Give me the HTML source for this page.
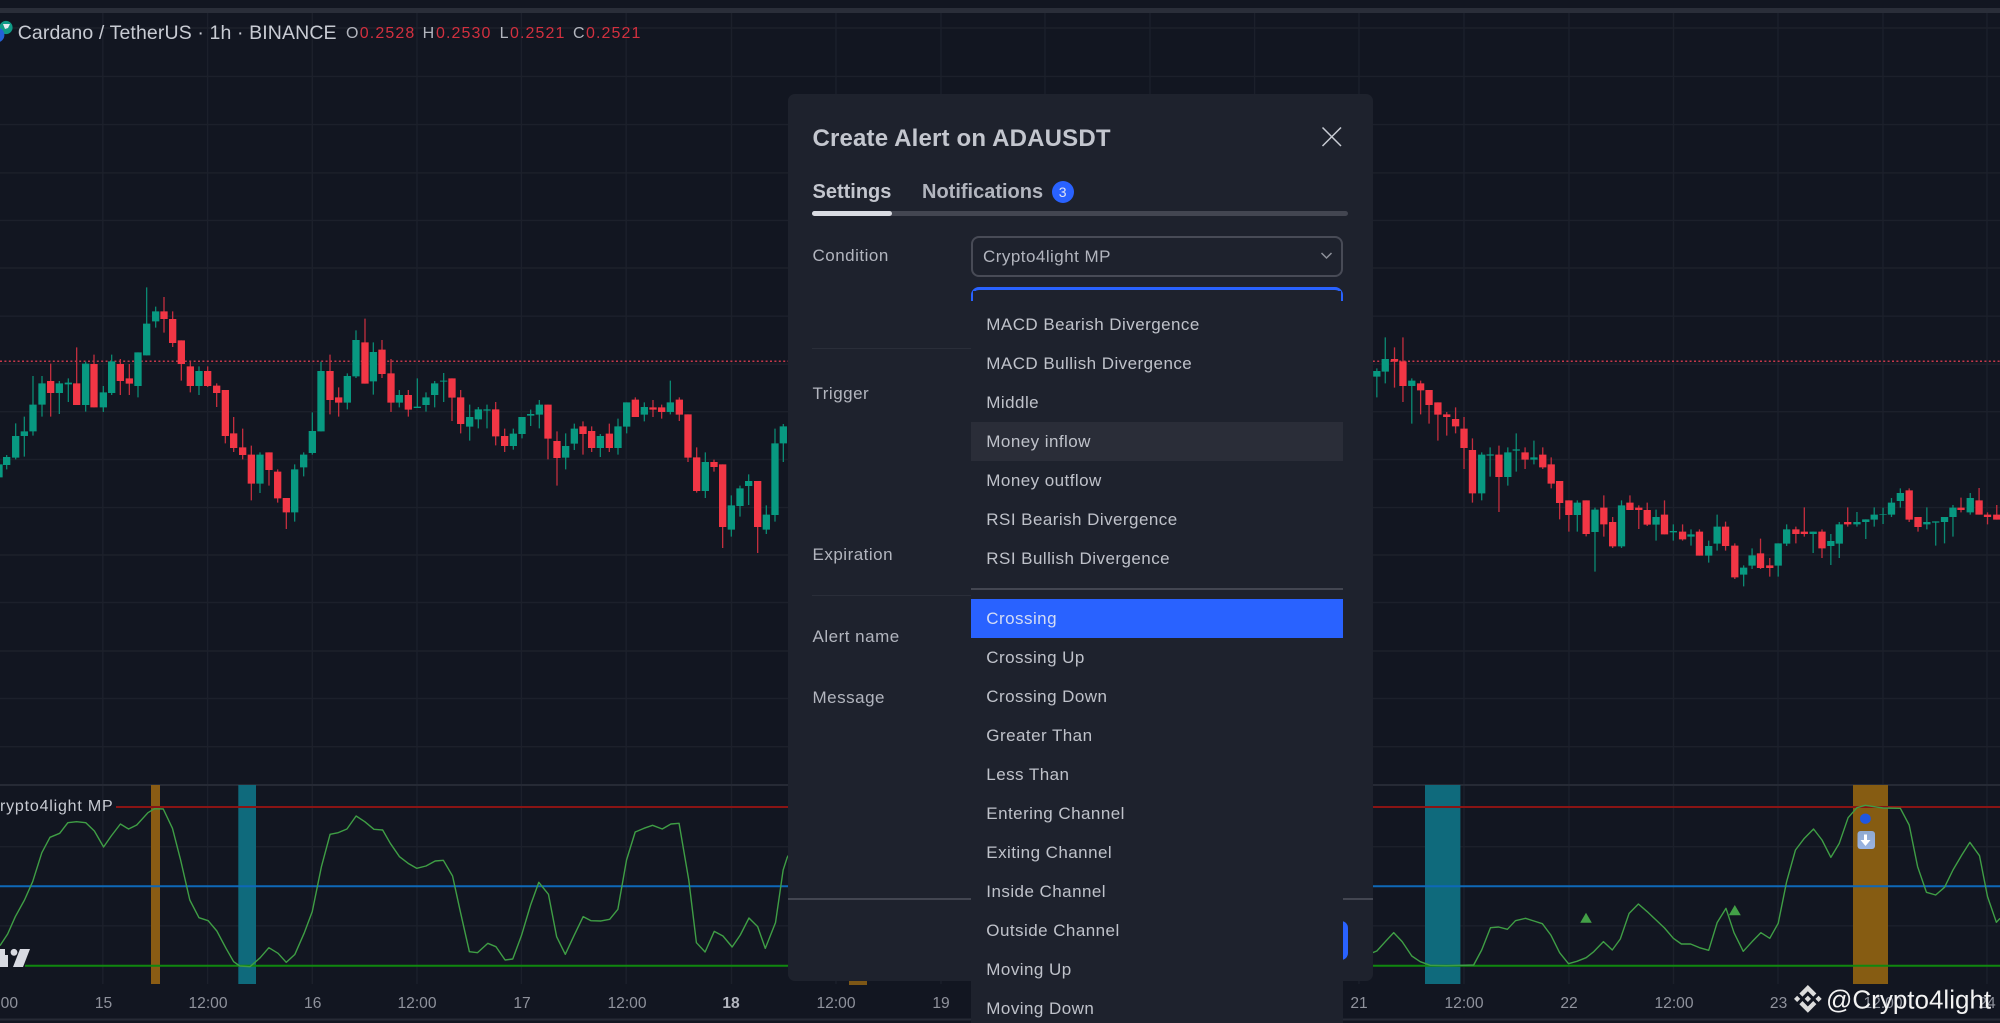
<!DOCTYPE html>
<html lang="en"><head><meta charset="utf-8"><title>Create Alert on ADAUSDT</title>
<style>
html,body{margin:0;padding:0;width:2000px;height:1023px;overflow:hidden;background:#121621;font-family:"Liberation Sans",sans-serif}
#s{position:absolute;left:0;top:0}
.a{position:absolute;white-space:nowrap}
.l{position:absolute;left:812.5px;color:#b2b5be;font-size:17px;letter-spacing:.5px;line-height:20px;white-space:nowrap}
.i{position:absolute;left:986.3px;color:#bfc2ca;font-size:17px;letter-spacing:.45px;line-height:20px;white-space:nowrap}
</style></head><body>
<svg id="s" width="2000" height="1023" viewBox="0 0 2000 1023" xmlns="http://www.w3.org/2000/svg">
<rect width="2000" height="1023" fill="#121621"/>
<rect y="8" width="2000" height="5" fill="#2a2e39"/>
<path stroke="#1c202b" stroke-width="1.4" fill="none" d="M0 28H2000M0 76.4H2000M0 124.6H2000M0 172.9H2000M0 220.4H2000M0 268H2000M0 316.2H2000M0 364.2H2000M0 411.7H2000M0 459.5H2000M0 507.6H2000M0 555H2000M0 602.5H2000M0 651H2000M0 698.5H2000M0 746.7H2000M0 846.7H2000M0 925.8H2000M102.8 13V984M207.6 13V984M312.3 13V984M417 13V984M521.4 13V984M626.2 13V984M731.5 13V984M836 13V984M941 13V984M1045 13V984M1150 13V984M1254.6 13V984M1359 13V984M1464 13V984M1569 13V984M1673.5 13V984M1778 13V984M1883 13V984M1987 13V984"/>
<path stroke="#262a35" stroke-width="2" fill="none" d="M0 785H2000M0 1019.5H2000"/>
<path stroke="#c4384a" stroke-width="1.5" stroke-dasharray="2 2.4" fill="none" d="M0 361.2H2000"/>

<!-- candles A -->
<g transform="translate(0 270) scale(.33333)" fill="none">
<path vector-effect="non-scaling-stroke" stroke="#0b8a73" stroke-width="1.3" d="M-3 575V630M20 555V598M47 460V568M73 440V560M99 318V497M126 318V440M178 333V432M205 325V396M257 275V425M310 348V426M335 254V375M414 247V382M440 52V256M467 110V173M597 289V375M780 547V669M884 583V755M911 547V619M937 427V554M963 275V484M1042 310V418M1068 181V324M1120 217V374M1198 360V412"/>
<path vector-effect="non-scaling-stroke" stroke="#c42e3e" stroke-width="1.3" d="M152 281V440M230 232V405M282 254V412M361 267V375M388 282V375M492 81V188M518 124V231M544 211V332M571 275V367M623 289V351M650 340V411M676 360V520M701 441V546M728 476V568M754 527V691M807 547V647M833 598V698M859 684V777M990 254V433M1016 352V440M1095 146V341M1146 210V324M1173 267V426"/>
<path vector-effect="non-scaling-stroke" stroke="#089981" stroke-width="7.3" d="M-3 583V622M20 561V585M47 498V563M73 484V498M99 404V484M126 340V404M178 340V369M205 338V343M257 281V405M310 367V412M335 274V369M414 247V348M440 161V256M467 124V154M597 303V348M780 554V641M884 598V727M911 554V592M937 483V549M963 303V484M1042 318V398M1068 210V319M1120 246V334M1198 375V398"/>
<path vector-effect="non-scaling-stroke" stroke="#f23645" stroke-width="7.3" d="M152 333V369M230 340V405M282 282V412M361 282V333M388 325V341M492 124V147M518 147V219M544 211V282M571 289V348M623 303V348M650 347V369M676 360V498M701 490V534M728 532V555M754 554V641M807 547V600M833 605V685M859 684V727M990 303V390M1016 382V398M1095 217V341M1146 239V312M1173 310V398"/>
</g>
<!-- candles B -->
<g transform="translate(400 340) scale(.33333)" fill="none">
<path vector-effect="non-scaling-stroke" stroke="#0b8a73" stroke-width="1.3" d="M52 115V204M78 157V215M104 123V202M131 99V186M209 194V302M235 201V265M261 194V265M340 266V329M366 231V295M392 209V258M418 180V265M497 280V388M523 251V330M601 282V351M654 236V344M680 187V280M733 187V244M811 122V223M916 337V474M994 466V590M1020 437V530M1046 403V495M1099 496V582M1125 266V545M1150 252V366"/>
<path vector-effect="non-scaling-stroke" stroke="#c42e3e" stroke-width="1.3" d="M25 150V230M156 115V243M182 150V280M287 186V316M314 266V336M444 194V358M471 274V437M549 244V344M575 259V336M628 251V336M706 172V231M759 180V231M785 194V236M838 172V243M864 223V366M890 322V458M942 359V395M968 373V624M1073 423V639"/>
<path vector-effect="non-scaling-stroke" stroke="#089981" stroke-width="7.3" d="M52 200V204M78 172V195M104 130V165M131 122V125M209 231V260M235 208V238M261 208V212M340 281V318M366 231V282M392 222V227M418 194V224M497 318V353M523 266V311M601 288V324M654 259V324M680 187V260M733 201V224M811 187V216M916 366V453M994 496V569M1020 445V498M1046 423V438M1099 524V569M1125 310V525M1150 259V310"/>
<path vector-effect="non-scaling-stroke" stroke="#f23645" stroke-width="7.3" d="M25 165V209M156 115V173M182 172V252M287 208V289M314 288V318M444 194V296M471 303V354M549 259V282M575 273V324M628 281V324M706 179V231M759 202V209M785 202V216M838 179V224M864 223V353M890 352V453M942 366V381M968 373V561M1073 423V561"/>
</g>
<!-- candles C -->
<g transform="translate(1370 320) scale(.40177 .33333)" fill="none">
<path vector-effect="non-scaling-stroke" stroke="#0b8a73" stroke-width="1.3" d="M17 145V232M38 52V190M104 175V311M278 397V541M299 382V470M343 382V497M364 340V455M408 362V433M516 541V635M560 563V755M626 541V684M712 569V662M755 613V662M799 628V677M843 662V728M864 584V692M930 736V799M951 685V747M1016 670V770M1037 613V678M1103 635V699M1147 642V735M1168 606V714M1212 576V620M1234 598V657M1255 562V620M1277 563V612M1298 534V591M1320 505V563M1386 562V628M1408 604V677M1430 591V670M1451 555V650M1494 519V584"/>
<path vector-effect="non-scaling-stroke" stroke="#c42e3e" stroke-width="1.3" d="M61 82V203M82 52V246M126 182V283M147 210V311M169 247V362M191 276V347M213 262V340M234 291V447M255 355V548M321 377V576M386 382V447M430 382V447M451 412V505M472 483V598M495 541V635M538 541V649M582 526V650M604 591V684M647 526V570M669 556V627M690 548V618M733 541V643M778 613V662M820 628V707M885 605V692M908 670V777M972 656V747M995 714V770M1060 620V670M1081 562V650M1125 628V714M1189 562V620M1342 505V606M1364 591V635M1471 533V577M1516 504V584M1537 577V613M1560 555V599"/>
<path vector-effect="non-scaling-stroke" stroke="#089981" stroke-width="7.3" d="M17 153V170M38 117V155M104 182V198M278 404V520M299 403V407M343 397V471M364 388V392M408 412V419M516 548V585M560 569V636M626 556V679M712 591V614M755 633V637M799 643V650M843 678V707M864 620V671M930 743V764M951 706V737M1016 670V737M1037 628V671M1103 635V642M1147 663V678M1168 613V671M1212 606V613M1234 598V606M1255 584V599M1277 583V585M1298 548V584M1320 519V543M1386 606V613M1408 604V608M1430 591V606M1451 563V591M1494 534V577"/>
<path vector-effect="non-scaling-stroke" stroke="#f23645" stroke-width="7.3" d="M61 117V125M82 124V198M126 190V211M147 210V255M169 247V284M191 283V291M213 297V319M234 326V384M255 390V520M321 404V471M386 397V419M430 404V442M451 433V491M472 483V549M495 541V585M538 541V642M582 563V613M604 606V679M647 548V570M669 563V570M690 570V614M733 584V643M778 635V658M820 635V707M885 620V678M908 677V772M972 700V744M995 736V744M1060 628V642M1081 635V642M1125 635V685M1189 606V613M1342 511V599M1364 591V621M1471 563V570M1516 541V584M1537 584V591M1560 584V599"/>
</g>

<!-- lower pane -->
<rect x="151" y="785" width="9" height="199" fill="#8a5c14"/>
<rect x="238.3" y="785" width="17.7" height="199" fill="#0f6a7c"/>
<rect x="1425" y="785" width="35.4" height="199" fill="#0f6a7c"/>
<rect x="1853" y="785" width="35" height="199" fill="#865c12"/>
<path stroke="#8a1414" stroke-width="2" fill="none" d="M116 807H2000"/>
<path stroke="#0e68b8" stroke-width="2" fill="none" d="M0 886.3H2000"/>
<path stroke="#10880f" stroke-width="2" fill="none" d="M25 965.7H2000"/>
<g transform="translate(0 770) scale(.5102 .33333)" fill="none">
<path vector-effect="non-scaling-stroke" stroke="#3f9e45" stroke-width="1.4" stroke-linejoin="round" d="M0 527L15 492 30 440 48 390 64 335 82 248 98 202 117 190 133 158 150 155 168 158 185 183 203 231 218 198 236 162 252 177 268 165 290 128 303 116 320 117 338 175 354 270 372 390 390 443 408 452 425 483 443 535 458 575 470 588 490 590 510 563 527 533 545 550 561 577 578 553 596 490 612 425 630 290 647 193 663 188 680 177 698 138 715 155 733 178 750 180 765 220 783 260 800 280 817 295 835 288 853 273 869 271 887 318 903 430 920 545 936 548 956 520 972 530 990 570 1005 567 1022 497 1040 405 1056 337 1075 373 1091 500 1108 553 1125 497 1143 440 1158 452 1178 453 1195 448 1211 418 1228 270 1245 186 1262 175 1279 166 1298 177 1315 162 1331 160 1350 330 1365 518 1382 546 1400 484 1417 498 1435 531 1451 495 1468 444 1485 470 1500 535 1520 458 1535 300 1543 262 1560 220"/>
</g>
<g transform="translate(1370 770) scale(.40177 .33333)" fill="none">
<path vector-effect="non-scaling-stroke" stroke="#3f9e45" stroke-width="1.4" stroke-linejoin="round" d="M7 548L17 543 38 515 59 488 80 515 104 558 125 575 150 586 190 587 258 585 278 540 300 473 320 471 342 478 362 452 387 445 408 453 429 461 450 495 472 548 494 581 515 574 538 563 557 545 581 515 603 540 623 507 645 430 668 402 690 425 712 450 733 474 755 505 775 522 798 522 820 533 843 541 864 458 886 415 906 488 929 544 951 515 973 488 995 505 1016 460 1037 335 1059 240 1081 205 1104 177 1125 210 1147 262 1168 220 1190 143 1212 113 1233 106 1255 110 1277 114 1320 115 1342 165 1363 290 1385 367 1408 375 1430 352 1451 300 1473 255 1493 217 1517 257 1537 380 1559 457 1568 445"/>
</g>
<path fill="#43a047" d="M1586 912.7L1591.8 922.7H1580.2ZM1734.8 905L1740.8 915.3H1728.8Z"/>
<ellipse cx="1865.4" cy="818.7" rx="5.4" ry="5.2" fill="#2157e0"/>
<defs><linearGradient id="em" x1="0" y1="0" x2="0" y2="1"><stop offset="0" stop-color="#8fa9cf"/><stop offset="1" stop-color="#9ab4e2"/></linearGradient></defs>
<rect x="1857.5" y="831" width="17.5" height="18" rx="3" fill="url(#em)"/>
<path fill="#fff" d="M1864 834.5h3v5.5h3.5l-5 6-5-6h3.5z"/>

<!-- TV logo -->
<path fill="#d8dae2" d="M0 949H5V955H8V967H0Z"/>
<circle cx="14" cy="952.3" r="3.4" fill="#d8dae2"/>
<path fill="#d8dae2" d="M20 949H30L23 967H13Z"/>

<text x="0" y="811" font-family="Liberation Sans, sans-serif" font-size="16" letter-spacing=".8" fill="#c8cbd3">rypto4light MP</text>

<!-- axis -->
<g font-family="Liberation Sans, sans-serif" font-size="15.6" fill="#8f929c" text-anchor="middle">
<text x="0" y="1008" text-anchor="end" dx="18">00</text>
<text x="103.5" y="1008">15</text><text x="208" y="1008">12:00</text><text x="312.7" y="1008">16</text>
<text x="417" y="1008">12:00</text><text x="522" y="1008">17</text><text x="627" y="1008">12:00</text>
<text x="731" y="1008" font-weight="bold" fill="#b2b5be">18</text>
<text x="836" y="1008">12:00</text><text x="941" y="1008">19</text><text x="1359" y="1008">21</text>
<text x="1464" y="1008">12:00</text><text x="1569" y="1008">22</text><text x="1674" y="1008">12:00</text>
<text x="1778.6" y="1008">23</text><text x="1883" y="1008">12:00</text><text x="1987" y="1008">24</text>
</g>

<!-- ADA icon -->
<circle cx="6" cy="27.5" r="6.6" fill="#0f9a86"/>
<circle cx="-3" cy="35" r="7.4" fill="#2460d8"/>
<path fill="#e6eaf0" d="M3 24h7l-2 4-3 1z"/>

<!-- watermark -->
<g transform="translate(1794 985) scale(.2188)" fill="#dcdcdc">
<path d="M38.73 53.2l24.59-24.58 24.6 24.6 14.3-14.31L63.32 0 24.43 38.9zM0 63.31l14.3-14.31 14.31 14.31-14.31 14.3zM38.73 73.41l24.59 24.59 24.6-24.6 14.31 14.29-38.9 38.91-38.91-38.88zM98 63.31l14.3-14.31 14.31 14.3-14.31 14.32zM77.83 63.3L63.32 48.78 52.59 59.51l-1.24 1.23-2.54 2.54 14.51 14.5 14.51-14.47z"/>
</g>
<text x="1826" y="1008.5" font-family="Liberation Sans, sans-serif" font-size="26" fill="#f2f2f2">@Crypto4light</text>
</svg>

<!-- header legend -->
<div class="a" style="left:17.7px;top:22px;font-size:19.5px;letter-spacing:.12px;line-height:22px;color:#c8cbd3">Cardano / TetherUS · 1h · BINANCE</div>
<div class="a" style="left:346px;top:24px;font-size:16px;line-height:19px;color:#b2b5be">O</div>
<div class="a" style="left:359.8px;top:24px;font-size:16px;line-height:19px;letter-spacing:1.1px;color:#d2303f">0.2528</div>
<div class="a" style="left:422.6px;top:24px;font-size:16px;line-height:19px;color:#b2b5be">H</div>
<div class="a" style="left:436px;top:24px;font-size:16px;line-height:19px;letter-spacing:1.1px;color:#d2303f">0.2530</div>
<div class="a" style="left:499.6px;top:24px;font-size:16px;line-height:19px;color:#b2b5be">L</div>
<div class="a" style="left:510px;top:24px;font-size:16px;line-height:19px;letter-spacing:1.1px;color:#d2303f">0.2521</div>
<div class="a" style="left:573px;top:24px;font-size:16px;line-height:19px;color:#b2b5be">C</div>
<div class="a" style="left:586px;top:24px;font-size:16px;line-height:19px;letter-spacing:1.1px;color:#d2303f">0.2521</div>

<!-- modal -->
<div class="a" style="left:788px;top:94px;width:584.5px;height:887px;background:#1e222d;border-radius:7px"></div>
<div class="a" style="left:1338px;top:920.7px;width:10.3px;height:39.3px;background:#2962ff;border-radius:0 7px 7px 0"></div>
<div class="a" style="left:812.5px;top:124.5px;font-size:24px;letter-spacing:.17px;line-height:28px;font-weight:bold;color:#c3c6ce">Create Alert on ADAUSDT</div>
<svg class="a" style="left:1320px;top:125px" width="24" height="24" viewBox="0 0 24 24"><path d="M2.5 2.5L21 21M21 2.5L2.5 21" stroke="#c8cbd3" stroke-width="1.5" fill="none"/></svg>
<div class="a" style="left:812.5px;top:180px;font-size:20px;line-height:24px;font-weight:bold;color:#c3c6ce">Settings</div>
<div class="a" style="left:922px;top:180px;font-size:20px;line-height:24px;font-weight:bold;color:#b2b5be">Notifications</div>
<div class="a" style="left:1051.7px;top:181px;width:22px;height:22px;border-radius:50%;background:#2962ff;color:#dfe3f2;font-size:14px;line-height:22px;text-align:center">3</div>
<div class="a" style="left:812px;top:211px;width:536px;height:5px;border-radius:3px;background:#434651"></div>
<div class="a" style="left:812px;top:211px;width:80px;height:5px;border-radius:3px;background:#d9dbe2"></div>
<div class="l" style="top:246px">Condition</div>
<div class="a" style="left:971px;top:235.7px;width:368px;height:37px;border:2px solid #484b56;border-radius:8px"></div>
<div class="a" style="left:983px;top:246.7px;font-size:17px;letter-spacing:.47px;line-height:20px;color:#b2b5be">Crypto4light MP</div>
<svg class="a" style="left:1319px;top:250px" width="15" height="11" viewBox="0 0 15 11"><path d="M2.5 3L7.5 8 12.5 3" stroke="#8d9099" stroke-width="1.5" fill="none"/></svg>
<div class="a" style="left:812px;top:347.5px;width:160px;height:1.5px;background:#2a2e39"></div>
<div class="l" style="top:384px">Trigger</div>
<div class="l" style="top:545px">Expiration</div>
<div class="a" style="left:812px;top:594.5px;width:160px;height:1.5px;background:#2a2e39"></div>
<div class="l" style="top:627px">Alert name</div>
<div class="l" style="top:688px">Message</div>
<div class="a" style="left:788px;top:898px;width:584.5px;height:2px;background:#434651"></div>
<div class="a" style="left:849px;top:981px;width:18px;height:3.5px;background:#7d5716"></div>

<!-- dropdown -->
<div class="a" style="left:971px;top:287px;width:368px;height:16px;border:2px solid #2962ff;border-top-width:3px;border-bottom:0;border-radius:8px 8px 0 0"></div>
<div class="a" style="left:973px;top:290.5px;width:368px;height:12px;background:#1e222d"></div>
<div class="a" style="left:971px;top:301px;width:372px;height:722px;background:#1e222d"></div>
<div class="a" style="left:971px;top:422px;width:372px;height:39px;background:#2a2d38"></div>
<div class="a" style="left:971px;top:588px;width:372px;height:2px;background:#434651"></div>
<div class="a" style="left:971px;top:599.3px;width:372px;height:39px;background:#2962ff"></div>
<div class="i" style="top:315.3px">MACD Bearish Divergence</div>
<div class="i" style="top:354.3px">MACD Bullish Divergence</div>
<div class="i" style="top:393.3px">Middle</div>
<div class="i" style="top:432.3px">Money inflow</div>
<div class="i" style="top:471.3px">Money outflow</div>
<div class="i" style="top:510.3px">RSI Bearish Divergence</div>
<div class="i" style="top:549.3px">RSI Bullish Divergence</div>
<div class="i" style="top:609px;color:#d3dcf5">Crossing</div>
<div class="i" style="top:648px">Crossing Up</div>
<div class="i" style="top:687px">Crossing Down</div>
<div class="i" style="top:726px">Greater Than</div>
<div class="i" style="top:765px">Less Than</div>
<div class="i" style="top:804px">Entering Channel</div>
<div class="i" style="top:843px">Exiting Channel</div>
<div class="i" style="top:882px">Inside Channel</div>
<div class="i" style="top:921px">Outside Channel</div>
<div class="i" style="top:960px">Moving Up</div>
<div class="i" style="top:999px">Moving Down</div>
</body></html>
